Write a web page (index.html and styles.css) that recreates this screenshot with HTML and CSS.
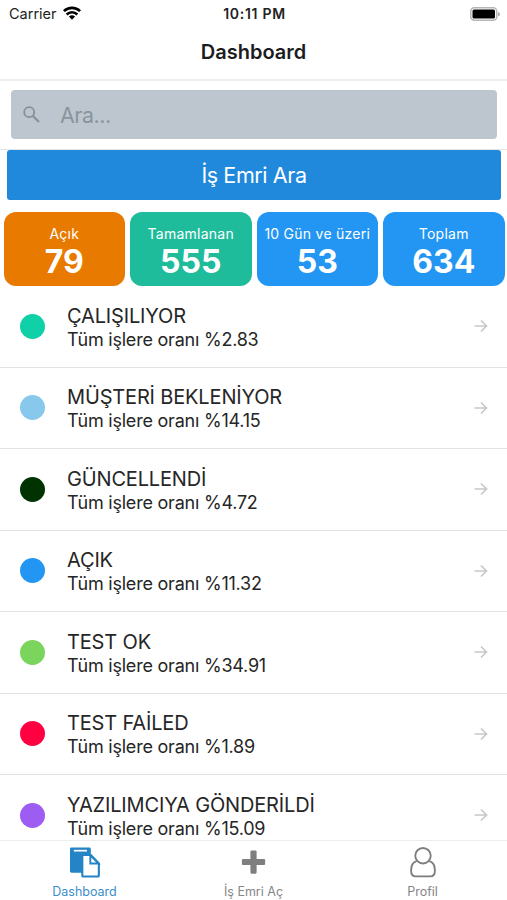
FILE: index.html
```html
<!DOCTYPE html>
<html lang="tr">
<head>
  <meta charset="utf-8">
  <meta name="viewport" content="width=device-width, initial-scale=1">
  <title>Dashboard</title>
  <link rel="stylesheet" href="styles.css">
</head>
<body>
  <div class="status-bar">
    <div class="carrier">
      <span>Carrier</span>
      <svg class="wifi" viewBox="0 0 18 14">
        <path d="M.9 5.2a11.5 11.5 0 0 1 16.200 0M3.700 8.500a7.500 7.500 0 0 1 10.600 0" fill="none" stroke="#000" stroke-width="2.6"/>
        <path d="M9 13.8L5.9 10.6a4.5 4.5 0 0 1 6.2 0z"/>
      </svg>
    </div>
    <div class="clock">10:11 PM</div>
    <svg class="battery" viewBox="0 0 30 14">
      <rect x=".75" y=".75" width="26" height="12.5" rx="3.5" fill="#fff" stroke="#b5b5b5" stroke-width="1.5"/>
      <rect x="2.5" y="2.5" width="22.5" height="9" rx="1.5"/>
      <path d="M28 5v4.5q2-1 2-2.2T28 5z" fill="#aaa"/>
    </svg>
  </div>

  <h1 class="header">Dashboard</h1>

  <div class="search">
    <div class="search-box">
      <svg class="search-icon" viewBox="0 0 17 17">
        <circle cx="6.2" cy="6.2" r="5" fill="none" stroke="#84909a" stroke-width="1.8"/>
        <path d="M10 10l6 6" stroke="#84909a" stroke-width="2.2"/>
      </svg>
      <input type="text" placeholder="Ara...">
    </div>
  </div>

  <button class="search-button">İş Emri Ara</button>

  <div class="cards">
    <div class="card orange">
      <span class="card-title">Açık</span>
      <span class="card-count">79</span>
    </div>
    <div class="card green">
      <span class="card-title">Tamamlanan</span>
      <span class="card-count">555</span>
    </div>
    <div class="card blue">
      <span class="card-title">10 Gün ve üzeri</span>
      <span class="card-count">53</span>
    </div>
    <div class="card blue">
      <span class="card-title">Toplam</span>
      <span class="card-count">634</span>
    </div>
  </div>

  <div class="list">
    <div class="row">
      <span class="dot working"></span>
      <div class="info">
        <div class="name">ÇALIŞILIYOR</div>
        <div class="rate">Tüm işlere oranı %2.83</div>
      </div>
      <svg class="arrow" viewBox="0 0 14 14"><path d="M.5 7h12M7 1.500L12.500 7 7 12.500"/></svg>
    </div>
    <div class="row">
      <span class="dot waiting"></span>
      <div class="info">
        <div class="name">MÜŞTERİ BEKLENİYOR</div>
        <div class="rate">Tüm işlere oranı %14.15</div>
      </div>
      <svg class="arrow" viewBox="0 0 14 14"><path d="M.5 7h12M7 1.500L12.500 7 7 12.500"/></svg>
    </div>
    <div class="row">
      <span class="dot updated"></span>
      <div class="info">
        <div class="name">GÜNCELLENDİ</div>
        <div class="rate">Tüm işlere oranı %4.72</div>
      </div>
      <svg class="arrow" viewBox="0 0 14 14"><path d="M.5 7h12M7 1.500L12.500 7 7 12.500"/></svg>
    </div>
    <div class="row">
      <span class="dot open"></span>
      <div class="info">
        <div class="name">AÇIK</div>
        <div class="rate">Tüm işlere oranı %11.32</div>
      </div>
      <svg class="arrow" viewBox="0 0 14 14"><path d="M.5 7h12M7 1.500L12.500 7 7 12.500"/></svg>
    </div>
    <div class="row">
      <span class="dot test-ok"></span>
      <div class="info">
        <div class="name">TEST OK</div>
        <div class="rate">Tüm işlere oranı %34.91</div>
      </div>
      <svg class="arrow" viewBox="0 0 14 14"><path d="M.5 7h12M7 1.500L12.500 7 7 12.500"/></svg>
    </div>
    <div class="row">
      <span class="dot test-failed"></span>
      <div class="info">
        <div class="name">TEST FAİLED</div>
        <div class="rate">Tüm işlere oranı %1.89</div>
      </div>
      <svg class="arrow" viewBox="0 0 14 14"><path d="M.5 7h12M7 1.500L12.500 7 7 12.500"/></svg>
    </div>
    <div class="row">
      <span class="dot sent"></span>
      <div class="info">
        <div class="name">YAZILIMCIYA GÖNDERİLDİ</div>
        <div class="rate">Tüm işlere oranı %15.09</div>
      </div>
      <svg class="arrow" viewBox="0 0 14 14"><path d="M.5 7h12M7 1.500L12.500 7 7 12.500"/></svg>
    </div>
  </div>

  <nav class="tabs">
    <a class="tab active">
      <svg viewBox="0 0 32 32">
        <path d="M2 .5h18.500q1.500 0 1.500 1.500v24.500H2q-1.500 0-1.500-1.500V2Q.5.5 2 .5z" fill="#2484c6"/>
        <path d="M4.500 3.800h13.500" stroke="#fff" stroke-width="1.800"/>
        <path d="M13.200 8.300h8.800l8.300 8.700v12.300q0 1.200-1.200 1.200H14.400q-1.200 0-1.200-1.200z" fill="#fff" stroke="#2484c6" stroke-width="2.200"/>
        <path d="M21.500 8.500V17h8.500z" fill="#fff" stroke="#2484c6" stroke-width="2"/>
      </svg>
      <span>Dashboard</span>
    </a>
    <a class="tab">
      <svg viewBox="0 0 32 32">
        <path d="M13.500 3.500h4q1.200 0 1.200 1.200v7.600h7.600q1.200 0 1.200 1.200v4q0 1.200-1.200 1.200h-7.600v7.600q0 1.200-1.200 1.200h-4q-1.200 0-1.200-1.200v-7.600H4.700q-1.200 0-1.200-1.200v-4q0-1.200 1.200-1.200h7.600V4.700q0-1.200 1.200-1.200z" fill="#7f7f7f"/>
      </svg>
      <span>İş Emri Aç</span>
    </a>
    <a class="tab">
      <svg viewBox="0 0 32 32" fill="none" stroke="#7d7d7d" stroke-width="1.900">
        <circle cx="16" cy="9" r="8"/>
        <path d="M9.500 14.500C5.500 15.500 3.700 19.500 3.700 24.500c0 3.700 2 5.800 5 5.800h14.600c3 0 5-2.100 5-5.800 0-5-1.800-9-5.800-10"/>
      </svg>
      <span>Profil</span>
    </a>
  </nav>
</body>
</html>
```
FILE: styles.css
```css
* {
  box-sizing: border-box;
}

body {
  margin: 0;
  height: 900px;
  display: flex;
  flex-direction: column;
  overflow: hidden;
  background-color: #fff;
  font-family: Inter, "Liberation Sans", sans-serif;
  color: #262626;
}

.status-bar {
  height: 27px;
  flex: none;
  display: grid;
  grid-template-columns: 1fr auto 1fr;
  align-items: center;
  padding: 0 7px 0 9px;
  font-size: 14.5px;
  color: #222;
}

.carrier {
  display: flex;
  align-items: center;
  gap: 6px;
}

.wifi {
  width: 18px;
  height: 14px;
  margin-bottom: 2px;
}

.clock {
  font-weight: 600;
  font-size: 14px;
  letter-spacing: 0.7px;
}

.battery {
  width: 30px;
  height: 14px;
  justify-self: end;
}

.header {
  height: 54px;
  flex: none;
  margin: 0;
  border-bottom: 2px solid #ededed;
  text-align: center;
  font-size: 20px;
  font-weight: 600;
  line-height: 51px;
  color: #1c1c1e;
}

.search {
  height: 69px;
  flex: none;
  padding: 9px 10px 10px 11px;
  border-bottom: 1px solid #e6e6e6;
}

.search-box {
  height: 49px;
  display: flex;
  align-items: center;
  padding-left: 12px;
  gap: 20px;
  border-radius: 4px;
  background-color: #bdc6cf;
}

.search-icon {
  width: 17px;
  height: 17px;
  flex: none;
}

.search-box input {
  flex: 1;
  min-width: 0;
  padding: 0;
  border: 0;
  background: none;
  font-family: inherit;
  font-size: 21.5px;
  letter-spacing: -0.5px;
}

.search-box input::placeholder {
  color: #88949e;
}

.search-button {
  height: 50px;
  flex: none;
  margin: 0 6px 0 7px;
  border: 0;
  border-radius: 3px;
  background-color: #2089dc;
  font-family: inherit;
  font-size: 21.5px;
  letter-spacing: -0.4px;
  color: #fff;
}

.cards {
  height: 74px;
  flex: none;
  display: grid;
  grid-template-columns: repeat(4, 1fr);
  gap: 5px;
  margin: 12px 2.5px 0 3.5px;
}

.card {
  display: flex;
  flex-direction: column;
  align-items: center;
  padding-top: 11px;
  border-radius: 12px;
  color: #fff;
}

.card-title {
  font-size: 14px;
  line-height: 21px;
  letter-spacing: 0.25px;
  white-space: nowrap;
}

.card-count {
  font-size: 32px;
  font-weight: 700;
  line-height: 35px;
}

.orange {
  background-color: #e87a00;
}

.green {
  background-color: #1fbc9c;
}

.blue {
  background-color: #2396f3;
}

.list {
  flex: 1;
  min-height: 0;
  overflow: hidden;
}

.row {
  height: 81.5px;
  display: flex;
  align-items: center;
  padding: 0 19px 0 20px;
  border-bottom: 1px solid #e2e2e2;
}

.dot {
  width: 25px;
  height: 25px;
  border-radius: 50%;
}

.info {
  flex: 1;
  margin-left: 22px;
  padding-top: 2px;
}

.name {
  font-size: 20px;
  line-height: 24px;
  letter-spacing: -0.16px;
}

.rate {
  font-size: 18px;
  line-height: 23px;
  letter-spacing: -0.22px;
}

.arrow {
  width: 14px;
  height: 14px;
  fill: none;
  stroke: #c8c8cb;
  stroke-width: 1.7;
}

.working {
  background-color: #0fd0a7;
}

.waiting {
  background-color: #88c8ec;
}

.updated {
  background-color: #003300;
}

.open {
  background-color: #2396f3;
}

.test-ok {
  background-color: #7bd45c;
}

.test-failed {
  background-color: #ff0040;
}

.sent {
  background-color: #9d5cf2;
}

.tabs {
  height: 60px;
  flex: none;
  display: flex;
  border-top: 1px solid #ededed;
  background-color: #fff;
}

.tab {
  flex: 1;
  display: flex;
  flex-direction: column;
  align-items: center;
  padding-top: 6px;
  font-size: 12.5px;
  color: #868686;
}

.tab svg {
  width: 32px;
  height: 32px;
}

.tab span {
  margin-top: 6px;
  line-height: 16px;
}

.tab.active {
  color: #3a8fc9;
}
```
